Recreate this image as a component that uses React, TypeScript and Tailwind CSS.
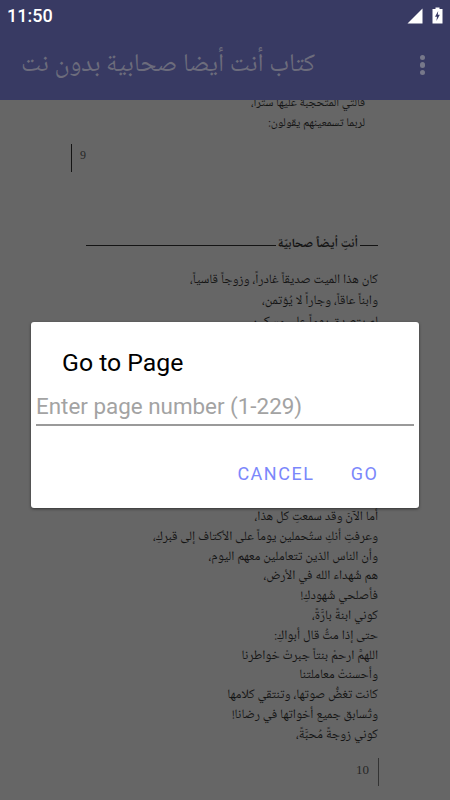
import { useState } from "react";

const arabicFont = "font-['Noto_Naskh_Arabic','Noto_Sans_Arabic','DejaVu_Sans',serif]";

const lowerLines = [
  "أما الآنَ وقد سمعتِ كل هذا،",
  "وعرفتِ أنكِ ستُحملين يوماً على الأكتاف إلى قبركِ،",
  "وأن الناس الذين تتعاملين معهم اليوم،",
  "هم شُهداء الله في الأرض،",
  "فأصلحي شُهودكِ!",
  "كوني ابنةً بارَّةً،",
  "حتى إذا متُّ قال أبواكِ:",
  "اللهمَّ ارحمْ بنتاً جبرتْ خواطرنا",
  "وأحسنتْ معاملتنا",
  "كانت تغضُّ صوتها، وتنتقي كلامها",
  "وتُسابق جميع أخواتها في رضانا!",
  "كوني زوجةً مُحبَّةً،",
];

function StatusBar() {
  return (
    <div className="flex h-[30px] items-center justify-between pl-[7px] pr-[7px] pt-[1px]">
      <span className="font-['Roboto',sans-serif] text-[18px] font-medium text-white">11:50</span>
      <div className="flex items-center gap-[9px]">
        <svg width="16" height="16" viewBox="0 0 16 16">
          <path d="M0.5 15.5 L15.5 0.5 V15.5 Z" fill="#fff" />
        </svg>
        <svg width="11" height="17" viewBox="0 0 11 17">
          <path d="M3.5 0.5 H7.5 V2 H10.5 V16.5 H0.5 V2 H3.5 Z" fill="#fff" />
          <path d="M6.2 4 L3 9.7 H5 L4.4 14 L7.8 7.8 H5.8 Z" fill="#383a63" />
        </svg>
      </div>
    </div>
  );
}

function AppBar() {
  return (
    <div className="flex h-[70px] items-center justify-between pl-[21px] pr-[25px]">
      <h1 dir="rtl" className={`${arabicFont} pt-[2px] text-[25.5px] leading-none font-normal text-[#6c6c7c]`}>
        كتاب أنت أيضا صحابية بدون نت
      </h1>
      <div className="flex flex-col gap-[2px]">
        <span className="h-[5.5px] w-[5.5px] rounded-full bg-[#77788a]" />
        <span className="h-[5.5px] w-[5.5px] rounded-full bg-[#77788a]" />
        <span className="h-[5.5px] w-[5.5px] rounded-full bg-[#77788a]" />
      </div>
    </div>
  );
}

function GoToPageDialog() {
  const [page, setPage] = useState("");
  return (
    <div className="absolute left-[31px] top-[322px] h-[186px] w-[388px] rounded-[3px] bg-white font-['Roboto',sans-serif] shadow-[0_1px_3px_rgba(0,0,0,0.5)]">
      <h2 className="pl-[31px] pt-[26px] text-[24.8px] leading-[30px] font-[450] text-black">Go to Page</h2>
      <div className="mx-[5px] mt-[10px] border-b-2 border-[#9a9a9a]">
        <input
          value={page}
          onChange={(e) => setPage(e.target.value)}
          placeholder="Enter page number (1-229)"
          className="h-[36px] w-full text-[22.4px] text-black outline-none placeholder:text-[#a3a3a3]"
        />
      </div>
      <div className="mt-[36px] flex justify-end gap-[36.5px] pr-[40.5px] text-[18px] leading-[24px] font-[450] tracking-[1.5px] text-[#7b87fb]">
        <button>CANCEL</button>
        <button>GO</button>
      </div>
    </div>
  );
}

export default function App() {
  return (
    <div className="relative h-[800px] w-[450px] overflow-hidden bg-[#666666]">
      <header className="bg-[#383a63]">
        <StatusBar />
        <AppBar />
      </header>

      <main dir="rtl" className={`${arabicFont} text-[13px] text-[#141414]`}>
        <div className="h-[34px] overflow-hidden pr-[85px] text-[12px]">
          <p className="-mt-[6px] h-[20px] leading-[20px]">فالتي المتحجبة عليها سترا،</p>
          <p className="h-[20px] leading-[20px]">لربما تسمعينهم يقولون:</p>
        </div>

        <div dir="ltr" className="mt-[10px] mr-auto ml-[71px] flex h-[28px] w-fit border-l border-[#141414] pl-[8px] pt-[3px] font-['Liberation_Serif',serif] text-[12px] leading-[16px] text-[#262626]">
          9
        </div>

        <div className="mt-[65px] mr-[72px] ml-[86px] flex items-center">
          <span className="h-px w-[18px] bg-[#141414]" />
          <span className="mx-[2px] text-[12.5px] leading-[16px] font-bold">أنتِ أيضاً صحابيّة</span>
          <span className="h-px flex-1 bg-[#141414]" />
        </div>

        <div className="mt-[17px] mr-[72px] leading-[21px]">
          <p>كان هذا الميت صديقاً غادراً، وزوجاً قاسياً،</p>
          <p>وابناً عاقاً، وجاراً لا يُؤتمن،</p>
          <p>لم يتصدق يوماً على مسكين،</p>
        </div>

        <div className="mt-[175px] mr-[72px] leading-[19.8px]">
          {lowerLines.map((line) => (
            <p key={line}>{line}</p>
          ))}
        </div>

        <div dir="ltr" className="mt-[12px] mr-[71px] ml-auto flex h-[28px] w-fit border-r border-[#333333] pr-[9px] pt-[4px] font-['Liberation_Serif',serif] text-[13px] leading-[16px] text-[#262626]">
          10
        </div>
      </main>

      <GoToPageDialog />
    </div>
  );
}
